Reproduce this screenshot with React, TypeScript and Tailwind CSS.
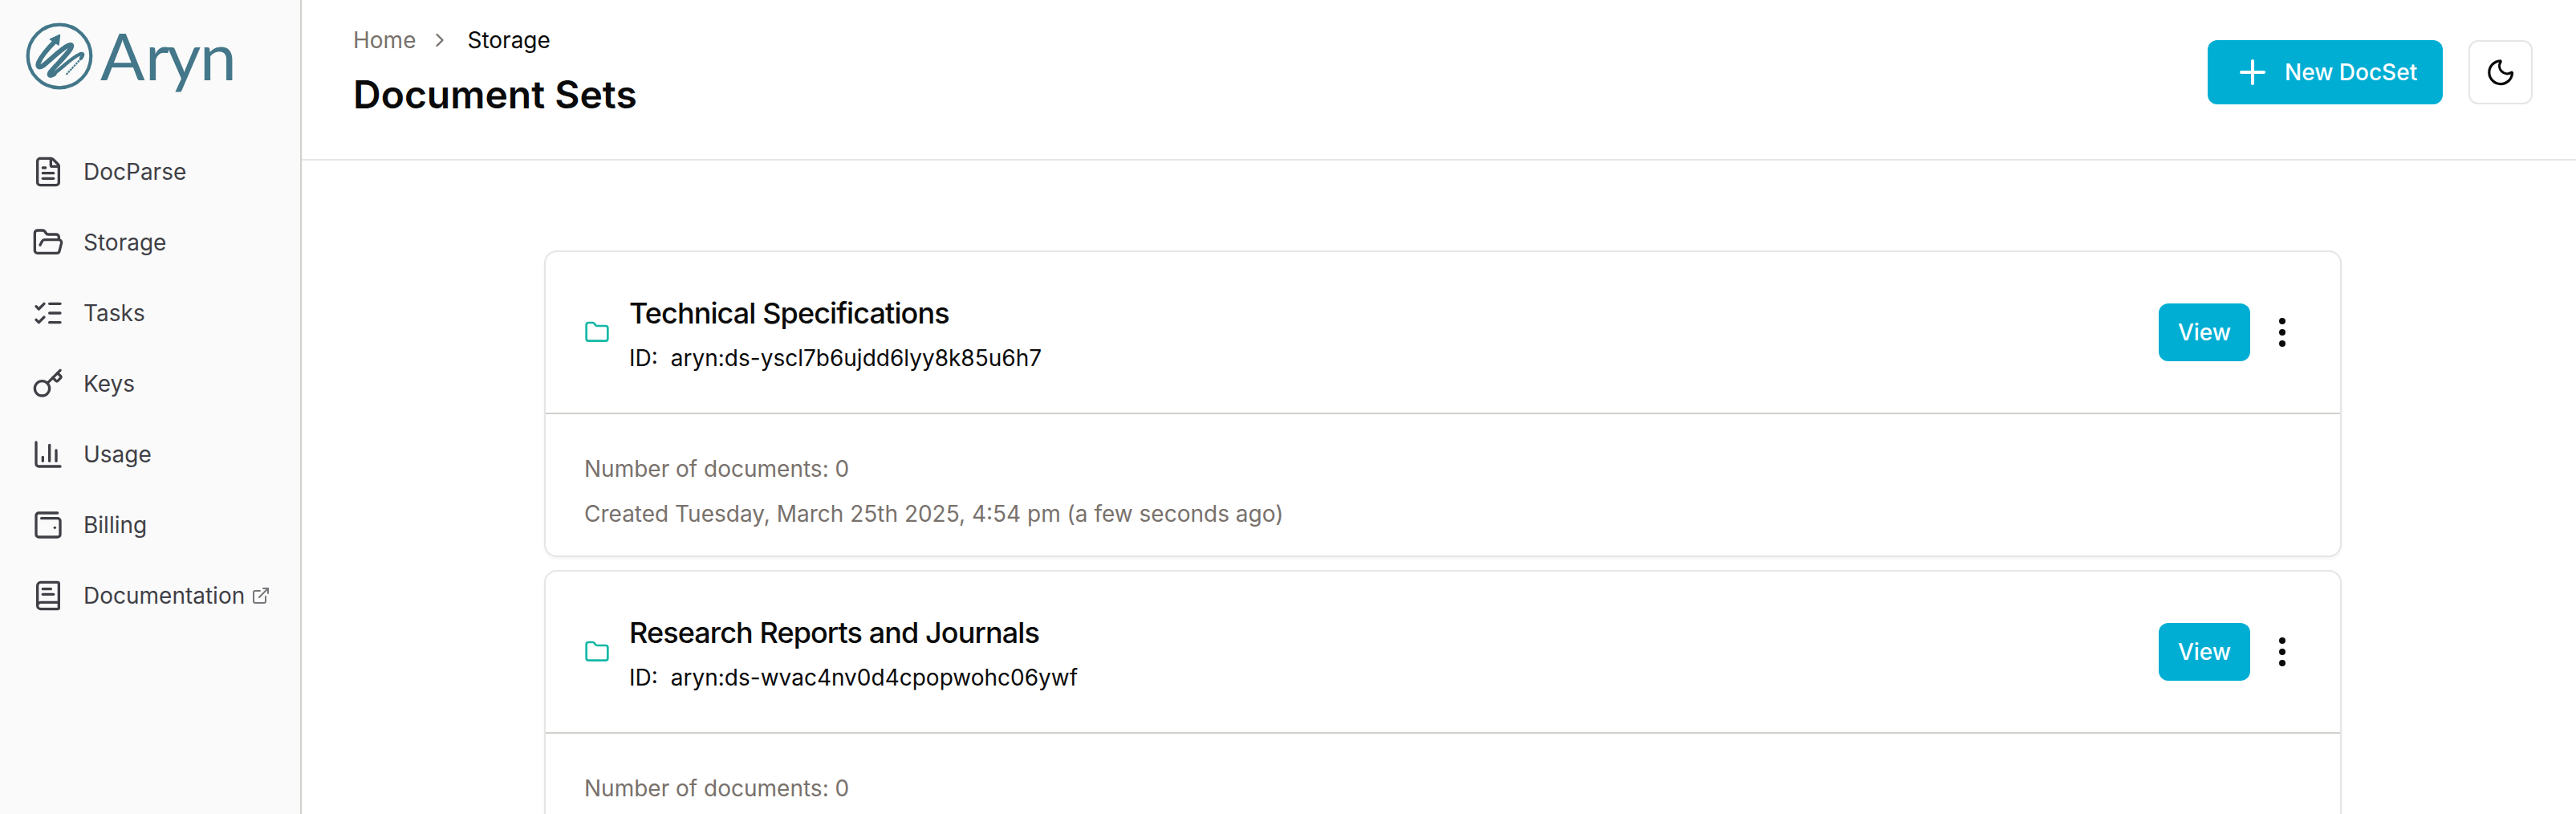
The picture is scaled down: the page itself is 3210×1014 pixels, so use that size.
import {
  BookText,
  ChartColumn,
  ChevronRight,
  EllipsisVertical,
  ExternalLink,
  FileText,
  Folder,
  FolderOpen,
  Key,
  ListChecks,
  Moon,
  Plus,
  WalletMinimal,
  type LucideIcon,
} from "lucide-react";

type NavItem = { label: string; icon: LucideIcon; external?: boolean };

const navItems: NavItem[] = [
  { label: "DocParse", icon: FileText },
  { label: "Storage", icon: FolderOpen },
  { label: "Tasks", icon: ListChecks },
  { label: "Keys", icon: Key },
  { label: "Usage", icon: ChartColumn },
  { label: "Billing", icon: WalletMinimal },
  { label: "Documentation", icon: BookText, external: true },
];

const docSets = [
  {
    name: "Technical Specifications",
    id: "aryn:ds-yscl7b6ujdd6lyy8k85u6h7",
    count: 0,
    created: "Tuesday, March 25th 2025, 4:54 pm (a few seconds ago)",
  },
  {
    name: "Research Reports and Journals",
    id: "aryn:ds-wvac4nv0d4cpopwohc06ywf",
    count: 0,
    created: "Tuesday, March 25th 2025, 4:54 pm (a few seconds ago)",
  },
];

function Logo() {
  return (
    <svg width="264" height="104" viewBox="30 24 264 104" fill="none" className="block text-[#437789]">
      <circle cx="74" cy="70" r="39.3" stroke="currentColor" strokeWidth="4.2" />
      <path
        d="M69 51C60 60 51 71 48 78C46 83.500 49 85 54 81.500C64 74 76 60.500 86 56.300C90 55 90 57.500 87.500 61.500C81 71 68 83 63 89.500C60 94 62.500 95.500 67.500 92"
        stroke="currentColor"
        strokeWidth="6"
        strokeLinecap="round"
        strokeLinejoin="round"
      />
      <path
        d="M66 92.500C77 85.500 89 71.500 100 67.200C104 66 104 68.500 101 72.500"
        stroke="currentColor"
        strokeWidth="4.4"
        strokeLinecap="round"
      />
      <path d="M101 73L82 93.500" stroke="currentColor" strokeWidth="2.2" strokeDasharray="2.600 0.900" />
      <path
        d="M62.500 49L74.500 43.500L73 56Z"
        fill="currentColor"
        stroke="currentColor"
        strokeWidth="1.500"
        strokeLinejoin="round"
      />
      <text
        x="125 181 208 249"
        y="99.500"
        fontFamily="Lato"
        fontSize="82"
        fill="currentColor"
      >
        Aryn
      </text>
    </svg>
  );
}

function Sidebar() {
  return (
    <aside className="flex w-[376px] shrink-0 flex-col border-r-2 border-[#d1d1cb] bg-[#fafafa]">
      <div className="pl-[30px] pt-6">
        <Logo />
      </div>
      <nav className="mt-[42px] flex flex-col">
        {navItems.map(({ label, icon: Icon, external }) => (
          <a key={label} className="flex h-[88px] items-center pl-10 text-[28px] text-[#3f3f46]">
            <Icon size={40} className="shrink-0" />
            <span className="ml-6 whitespace-nowrap">{label}</span>
            {external && <ExternalLink size={24} className="ml-2 shrink-0 opacity-70" />}
          </a>
        ))}
      </nav>
    </aside>
  );
}

function Header() {
  return (
    <header className="flex h-[200px] shrink-0 items-start justify-between border-b-2 border-[#e5e5e5] pl-16 pr-[54px]">
      <div className="pt-[30px]">
        <div className="flex items-center gap-4 text-[28px] leading-10">
          <span className="text-[#78716c]">Home</span>
          <ChevronRight size={28} className="text-[#78716c]" />
          <span className="ml-1">Storage</span>
        </div>
        <h1 className="mt-4 text-5xl leading-[64px] font-semibold">Document Sets</h1>
      </div>
      <div className="mt-[50px] flex gap-8">
        <button className="flex h-20 w-[293px] items-center gap-4 rounded-xl bg-[#00aed4] pl-8 text-[28px] font-medium whitespace-nowrap text-white">
          <Plus size={48} />
          New DocSet
        </button>
        <button className="flex size-20 items-center justify-center rounded-xl border-2 border-[#e5e5e5]">
          <Moon size={38.4} />
        </button>
      </div>
    </header>
  );
}

function DocSetCard({ name, id, count, created }: (typeof docSets)[number]) {
  return (
    <section className="shrink-0 rounded-2xl border-2 border-[#e5e5e5] bg-white shadow-[0_2px_4px_0_rgba(0,0,0,0.05)]">
      <div className="flex h-[202px] items-center border-b-2 border-[#d1d1cb] px-12">
        <Folder size={32} className="shrink-0 text-[#14b8a6]" />
        <div className="ml-6 flex-1">
          <h2 className="text-4xl leading-[56px] font-medium tracking-tight">{name}</h2>
          <p className="mt-2 flex gap-4 text-[28px] leading-10">
            <span>ID:</span>
            <span>{id}</span>
          </p>
        </div>
        <button className="flex h-[72px] w-[114px] items-center justify-center rounded-xl bg-[#00aed4] text-[28px] font-medium text-white">
          View
        </button>
        <EllipsisVertical size={48} className="ml-4" />
      </div>
      <div className="flex flex-col gap-4 px-12 pt-12 pb-8 text-[28px] leading-10 text-[#78716c]">
        <p>Number of documents: {count}</p>
        <p>Created {created}</p>
      </div>
    </section>
  );
}

export default function App() {
  return (
    <div className="flex h-screen overflow-hidden bg-white font-[Inter,sans-serif] text-[#0a0a0a]">
      <Sidebar />
      <div className="flex min-w-0 flex-1 flex-col">
        <Header />
        <main className="flex flex-1 flex-col gap-4 overflow-hidden pt-28 pr-[292px] pl-[302px]">
          {docSets.map((docSet) => (
            <DocSetCard key={docSet.id} {...docSet} />
          ))}
        </main>
      </div>
    </div>
  );
}
